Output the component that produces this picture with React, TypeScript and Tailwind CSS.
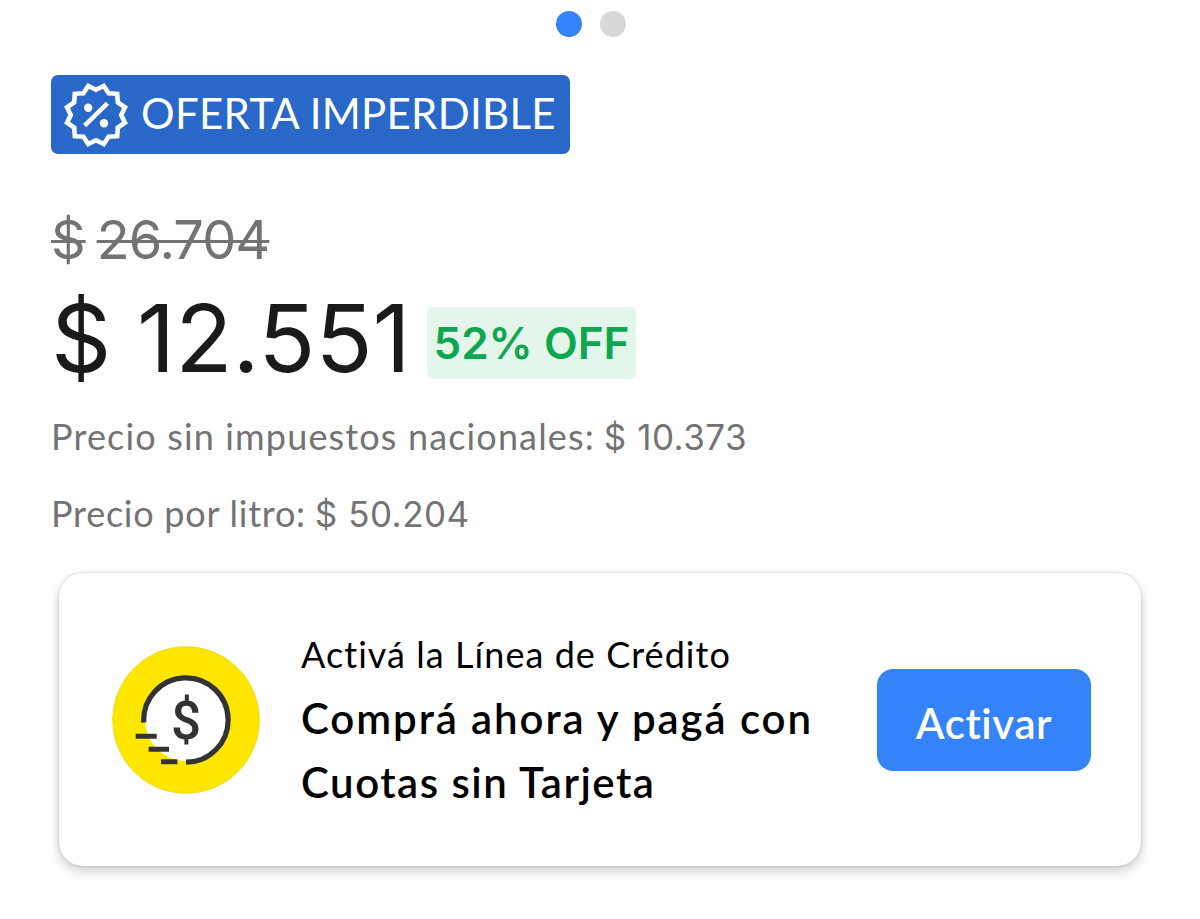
const STAR_POINTS = Array.from({ length: 24 }, (_, i) => {
  const radius = i % 2 === 0 ? 25.2 : 30;
  const angle = (i * Math.PI) / 12 - Math.PI / 2;
  return `${(32 + radius * Math.cos(angle)).toFixed(2)},${(32 + radius * Math.sin(angle)).toFixed(2)}`;
}).join(" ");

function OfferIcon() {
  return (
    <svg className="size-16 shrink-0" viewBox="0 0 64 64" fill="none" stroke="#fff" aria-hidden>
      <polygon points={STAR_POINTS} strokeWidth="4.6" />
      <path d="M20.6 42.6 43.4 20.4" strokeWidth="4.4" />
      <circle cx="24.2" cy="24.8" r="4.2" fill="#fff" stroke="none" />
      <circle cx="40" cy="40.2" r="4.2" fill="#fff" stroke="none" />
    </svg>
  );
}

function CreditIcon() {
  return (
    <svg className="size-[148px] shrink-0" viewBox="0 0 148 148" fill="none" aria-hidden>
      <circle cx="74" cy="74" r="73.2" fill="#ffe600" stroke="#eed80c" />
      <circle cx="74" cy="74" r="41" fill="#fff" />
      <path d="M31.8 76.5A42.2 42.2 0 1 1 74 116.2" stroke="#333" strokeWidth="5.2" />
      <path d="M23.7 90.2h21M36.6 103.2h20.4M49 115.7h16.4" stroke="#333" strokeWidth="5" />
      <text
        x="74"
        y="93"
        textAnchor="middle"
        className="fill-[#333] font-['Roboto',sans-serif] text-[53px] font-medium"
      >
        $
      </text>
    </svg>
  );
}

function PriceNote({
  label,
  amount,
  className,
}: {
  label: string;
  amount: string;
  className: string;
}) {
  return (
    <p className="flex h-12 items-baseline whitespace-nowrap text-[36px] leading-[48px] text-[#737373]">
      <span className={className}>{label}</span>
      <span className="ml-[9px] font-['Inter',sans-serif] text-[35px] tracking-[0.5px]">
        {amount}
      </span>
    </p>
  );
}

export default function App() {
  return (
    <main className="h-[919px] w-[1200px] overflow-hidden bg-white pl-[51px] font-['Lato',sans-serif]">
      <div className="-ml-[51px] flex h-[75px] justify-center gap-[18px] pr-[19px] pt-[11px]">
        <span className="size-[26px] rounded-full bg-[#3483fa]" />
        <span className="size-[26px] rounded-full bg-[#d8d8d8]" />
      </div>

      <div className="flex h-[79px] w-[519px] items-center rounded-[7px] bg-[#2968c8] pl-[13px]">
        <OfferIcon />
        <span className="ml-[13px] whitespace-nowrap pb-1 text-[42px] leading-[50px] tracking-[0.3px] text-white">
          OFERTA IMPERDIBLE
        </span>
      </div>

      <p className="mt-[54px] flex h-16 font-['Inter',sans-serif] text-[54px] leading-[64px] text-[#737373]">
        <s className="mr-[11px] decoration-[3px]">$</s>
        <s className="tracking-[-0.9px] decoration-[3px]">26.704</s>
      </p>

      <div className="mt-[18px] flex h-24 items-center">
        <p className="flex w-[376px] whitespace-nowrap font-['Inter',sans-serif] text-[94px] leading-[96px] text-[#1a1a1a]">
          <span className="w-[86px]">$</span>
          <span>12.551</span>
        </p>
        <span className="mt-[10px] flex h-[72px] w-[209px] items-center justify-center whitespace-nowrap rounded-[6px] bg-[#e4f5ec] font-['Inter',sans-serif] text-[44px] font-semibold text-[#0fa650]">
          52% OFF
        </span>
      </div>

      <div className="mt-[26px] flex flex-col gap-[29px]">
        <PriceNote
          label="Precio sin impuestos nacionales:"
          amount="$ 10.373"
          className="tracking-[1.15px]"
        />
        <PriceNote label="Precio por litro:" amount="$ 50.204" className="tracking-[0.75px]" />
      </div>

      <section className="ml-2 mt-9 flex h-[293px] w-[1082px] items-center rounded-[24px] bg-white pl-[53px] shadow-[0_0_3px_rgba(0,0,0,0.18),0_5px_12px_rgba(0,0,0,0.2)]">
        <CreditIcon />
        <div className="ml-[41px] flex w-[576px] flex-col gap-2 whitespace-nowrap pt-1 text-black">
          <p className="text-[36px] leading-[48px] tracking-[1.05px]">Activá la Línea de Crédito</p>
          <p className="text-[42px] font-semibold leading-[64px] tracking-[1.9px]">
            Comprá ahora y pagá con
            <br />
            <span className="tracking-[1.5px]">Cuotas sin Tarjeta</span>
          </p>
        </div>
        <button className="flex h-[102px] w-[214px] items-center justify-center rounded-[16px] bg-[#3483fa] pt-[7px] text-[42px] font-semibold tracking-[0.6px] text-white">
          Activar
        </button>
      </section>
    </main>
  );
}
